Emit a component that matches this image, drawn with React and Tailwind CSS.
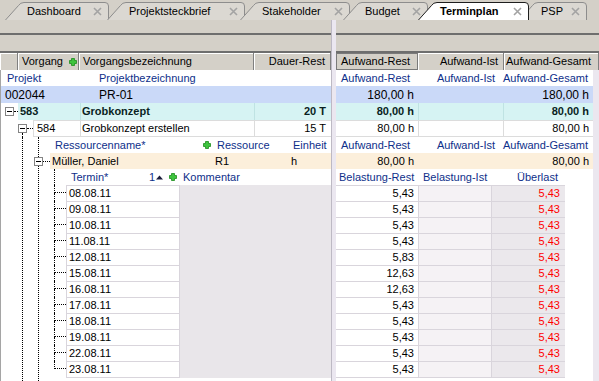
import React from 'react';

const tabs = [
  { label: 'Dashboard', w: 104, wc: 'w-[104px]', mc: 'ml-[5px]' },
  { label: 'Projektsteckbrief', w: 138, wc: 'w-[138px]', mc: '-ml-[2px]' },
  { label: 'Stakeholder', w: 110, wc: 'w-[110px]', mc: '-ml-[5px]' },
  { label: 'Budget', w: 85, wc: 'w-[85px]', mc: '-ml-[7px]' },
  { label: 'Terminplan', w: 111, wc: 'w-[111px]', mc: '-ml-[10px]', active: true },
  { label: 'PSP', w: 68, wc: 'w-[68px]', mc: '-ml-[10px]' },
];

const days = [
  ['08.08.11', '5,43'],
  ['09.08.11', '5,43'],
  ['10.08.11', '5,43'],
  ['11.08.11', '5,43'],
  ['12.08.11', '5,83'],
  ['15.08.11', '12,63'],
  ['16.08.11', '12,63'],
  ['17.08.11', '5,43'],
  ['18.08.11', '5,43'],
  ['19.08.11', '5,43'],
  ['22.08.11', '5,43'],
  ['23.08.11', '5,43'],
];

const blue = 'text-[#0e2f8a]';
const headCell = 'flex items-center border-r border-[#808080] shadow-[inset_1px_1px_0_#ffffff]';

function CloseX() {
  return (
    <svg width="9" height="9" className="relative shrink-0">
      <path d="M1 1L8 8M8 1L1 8" stroke="#a3a3a3" strokeWidth="1.6" />
    </svg>
  );
}

function Tab({ label, w, wc, mc, active }) {
  const d = `M0.5 18 L13.5 3.5 Q15.5 0.5 19 0.5 H${w - 4} Q${w - 0.5} 0.5 ${w - 0.5} 4 V18`;
  return (
    <div className={`relative flex h-[18px] shrink-0 items-center justify-between pl-[22px] pr-[7px] pt-px ${wc} ${mc} ${active ? 'z-10 font-bold' : ''}`}>
      <svg className="absolute left-0 top-0" width={w} height="18">
        <path d={d} fill={active ? '#ffffff' : '#dbd8d2'} stroke={active ? '#1e1e1e' : '#8d8d8d'} />
      </svg>
      <span className="relative">{label}</span>
      <CloseX />
    </div>
  );
}

function Expander({ className = '' }) {
  return (
    <div className={`relative flex h-[9px] w-[9px] shrink-0 items-center justify-center border border-[#848484] bg-white ${className}`}>
      <div className="h-px w-[5px] bg-black" />
    </div>
  );
}

function Plus() {
  return (
    <svg width="8" height="8" className="shrink-0">
      <path d="M2.5 0.5H5.5V2.5H7.5V5.5H5.5V7.5H2.5V5.5H0.5V2.5H2.5Z" fill="#3ec43e" stroke="#1c8c1c" strokeWidth="0.8" />
    </svg>
  );
}

function SortUp() {
  return (
    <svg width="8" height="5" className="shrink-0">
      <polygon points="0,4.5 3.5,0.5 7,4.5" fill="#1a1a3a" />
    </svg>
  );
}

function Bands() {
  return (
    <>
      <div className="h-[15px] shrink-0 border-b-2 border-[#6e6e6e]" />
      <div className="h-[18px] shrink-0 border-b-2 border-[#6e6e6e]" />
    </>
  );
}

function LeftPanel() {
  return (
    <div className="flex w-[331px] shrink-0 flex-col">
      <Bands />
      <div className="flex h-[17px] shrink-0">
        <div className={`${headCell} w-[18px]`} />
        <div className={`${headCell} w-[61px] pl-[4px]`}>
          <span className="w-[47px]">Vorgang</span>
          <Plus />
        </div>
        <div className={`${headCell} w-[175px] pl-[4px]`}>Vorgangsbezeichnung</div>
        <div className={`${headCell} flex-1 justify-end pr-[5px]`}>Dauer-Rest</div>
      </div>

      <div className="flex flex-1 flex-col border-l border-[#a5a5a5] bg-white">
        <div className={`flex h-[16px] shrink-0 items-center pl-[6px] ${blue}`}>
          <span className="w-[92px] shrink-0">Projekt</span>
          <span>Projektbezeichnung</span>
        </div>
        <div className="flex h-[17px] shrink-0 items-center bg-[#cad9f8] pl-[4px] text-[12px]">
          <span className="w-[94px] shrink-0">002044</span>
          <span>PR-01</span>
        </div>

        {/* 583 */}
        <div className="flex h-[17px] shrink-0 items-center font-bold text-[#0a1f1f]">
          <div className="flex w-[17px] shrink-0 items-center">
            <Expander className="ml-[4px]" />
            <div className="w-[4px] border-t border-dotted border-black" />
          </div>
          <div className="flex h-full flex-1 bg-[#d6f3f3]">
            <div className="flex w-[62px] shrink-0 items-center pl-[2px]">583</div>
            <div className="flex w-[174px] shrink-0 items-center border-l border-[#bfe3e3] pl-[1px]">Grobkonzept</div>
            <div className="flex flex-1 items-center justify-end border-l border-[#bfe3e3] pr-[5px]">20 T</div>
          </div>
        </div>

        {/* 584 */}
        <div className="flex h-[17px] shrink-0 items-center">
          <div className="w-[17px] shrink-0" />
          <div className="flex h-full w-[9px] shrink-0 flex-col items-center">
            <div className="flex-1" />
            <Expander />
            <div className="w-0 flex-1 border-l border-dotted border-black" />
          </div>
          <div className="w-[6px] shrink-0 border-t border-dotted border-black" />
          <div className="flex h-full flex-1 border-y border-l border-[#dcdcdc]">
            <div className="flex w-[46px] shrink-0 items-center pl-[3px]">584</div>
            <div className="flex w-[174px] shrink-0 items-center border-l border-[#dcdcdc] pl-[1px]">Grobkonzept erstellen</div>
            <div className="flex flex-1 items-center justify-end border-l border-[#dcdcdc] pr-[5px]">15 T</div>
          </div>
        </div>

        <div className="ml-[21px] flex flex-1 flex-col border-l border-dotted border-black">
          <div className="ml-[15px] flex flex-1 flex-col border-l border-dotted border-black">
            <div className={`flex h-[16px] shrink-0 items-center pl-[16px] ${blue}`}>
              <span className="w-[148px] shrink-0">Ressourcenname*</span>
              <Plus />
              <span className="ml-[6px] w-[76px] shrink-0">Ressource</span>
              <span>Einheit</span>
            </div>

            <div className="flex h-[16px] shrink-0 items-center">
              <Expander className="-ml-[5px]" />
              <div className="w-[7px] shrink-0 border-t border-dotted border-black" />
              <div className="flex h-full flex-1 items-center bg-[#fcefdb] pl-[2px]">
                <span className="w-[163px] shrink-0">Müller, Daniel</span>
                <span className="w-[76px] shrink-0">R1</span>
                <span>h</span>
              </div>
            </div>

            <div className={`ml-[15px] flex h-[16px] shrink-0 items-center border-l border-dotted border-black pl-[16px] ${blue}`}>
              <span className="w-[78px] shrink-0">Termin*</span>
              <span className="w-[7px] shrink-0">1</span>
              <SortUp />
              <span className="ml-[5px]">
                <Plus />
              </span>
              <span className="ml-[6px]">Kommentar</span>
            </div>

            {days.map(([date], i) => {
              const last = i === days.length - 1;
              return (
                <div key={date} className={`ml-[15px] flex shrink-0 ${last ? 'h-[17px]' : 'h-[16px]'}`}>
                  <div className="flex w-[12px] shrink-0 flex-col">
                    <div className="h-[8px] border-b border-l border-dotted border-black" />
                    {!last && <div className="flex-1 border-l border-dotted border-black" />}
                  </div>
                  <div className={`flex w-[114px] shrink-0 items-center border-x border-t border-[#d9d5dc] bg-white pl-[2px] ${last ? 'border-b' : ''}`}>
                    {date}
                  </div>
                  <div className="flex-1 bg-[#e9e6ea]" />
                </div>
              );
            })}
          </div>
        </div>
      </div>
    </div>
  );
}

function RightPanel() {
  return (
    <div className="flex flex-1 flex-col">
      <Bands />
      <div className="flex h-[17px] shrink-0">
        <div className="flex w-[82px] shrink-0 items-center border border-[#7a7a7a] pl-[4px]">Aufwand-Rest</div>
        <div className={`${headCell} w-[86px] shrink-0 justify-end pr-[5px]`}>Aufwand-Ist</div>
        <div className={`${headCell} flex-1 pl-[2px]`}>Aufwand-Gesamt</div>
      </div>

      <div className="flex flex-1 bg-white">
        <div className="flex w-[257px] shrink-0 flex-col">
          <div className={`flex h-[16px] shrink-0 items-center ${blue}`}>
            <span className="w-[82px] shrink-0 pl-[5px]">Aufwand-Rest</span>
            <span className="w-[85px] shrink-0 pr-[8px] text-right">Aufwand-Ist</span>
            <span>Aufwand-Gesamt</span>
          </div>
          <div className="flex h-[17px] shrink-0 items-center bg-[#cad9f8] text-[12px]">
            <span className="w-[82px] shrink-0 pr-[4px] text-right">180,00 h</span>
            <span className="w-[85px] shrink-0" />
            <span className="flex-1 pr-[4px] text-right">180,00 h</span>
          </div>
          <div className="flex h-[17px] shrink-0 bg-[#d6f3f3] font-bold text-[#0a1f1f]">
            <div className="flex w-[82px] shrink-0 items-center justify-end pr-[4px]">80,00 h</div>
            <div className="w-[85px] shrink-0 border-l border-[#bfe3e3]" />
            <div className="flex flex-1 items-center justify-end border-l border-[#bfe3e3] pr-[4px]">80,00 h</div>
          </div>
          <div className="flex h-[17px] shrink-0 border-y border-[#dcdcdc]">
            <div className="flex w-[82px] shrink-0 items-center justify-end pr-[4px]">80,00 h</div>
            <div className="w-[85px] shrink-0 border-l border-[#dcdcdc]" />
            <div className="flex flex-1 items-center justify-end border-l border-[#dcdcdc] pr-[4px]">80,00 h</div>
          </div>
          <div className={`flex h-[16px] shrink-0 items-center ${blue}`}>
            <span className="w-[82px] shrink-0 pl-[5px]">Aufwand-Rest</span>
            <span className="w-[85px] shrink-0 pr-[8px] text-right">Aufwand-Ist</span>
            <span>Aufwand-Gesamt</span>
          </div>
          <div className="flex h-[16px] shrink-0 items-center bg-[#fcefdb]">
            <span className="w-[82px] shrink-0 pr-[4px] text-right">80,00 h</span>
            <span className="w-[85px] shrink-0" />
            <span className="flex-1 pr-[4px] text-right">80,00 h</span>
          </div>
          <div className={`flex h-[16px] shrink-0 items-center ${blue}`}>
            <span className="w-[83px] shrink-0 pl-[3px]">Belastung-Rest</span>
            <span className="w-[73px] shrink-0 pl-[4px]">Belastung-Ist</span>
            <span className="w-[73px] shrink-0 pr-[7px] text-right">Überlast</span>
          </div>
          {days.map(([date, val], i) => {
            const last = i === days.length - 1;
            const edge = last ? 'border-b' : '';
            return (
              <div key={date} className={`flex shrink-0 ${last ? 'h-[17px]' : 'h-[16px]'}`}>
                <div className={`flex w-[83px] shrink-0 items-center justify-end border-r border-t border-[#d9d5dc] bg-white pr-[4px] ${edge}`}>{val}</div>
                <div className={`w-[73px] shrink-0 border-r border-t border-[#d9d5dc] bg-[#f5f2f5] ${edge}`} />
                <div className={`flex w-[73px] shrink-0 items-center justify-end border-t border-[#d9d5dc] bg-[#ebe8ec] pr-[5px] text-[#ff0000] ${edge}`}>5,43</div>
              </div>
            );
          })}
        </div>
        <div className="flex-1 bg-[#ebe7ef]" />
      </div>
    </div>
  );
}

export default function App() {
  return (
    <div className="flex h-[381px] w-[599px] flex-col overflow-hidden bg-[#d4d0c8] font-['Liberation_Sans',Arial,sans-serif] text-[11px] leading-none text-black">
      <div className="flex h-[20px] shrink-0 items-end">
        {tabs.map((t) => (
          <Tab key={t.label} {...t} />
        ))}
      </div>
      <div className="flex flex-1">
        <LeftPanel />
        <div className="w-[5px] shrink-0 border-l border-[#bdb9c4] bg-[#ebe7f0]" />
        <RightPanel />
      </div>
    </div>
  );
}
